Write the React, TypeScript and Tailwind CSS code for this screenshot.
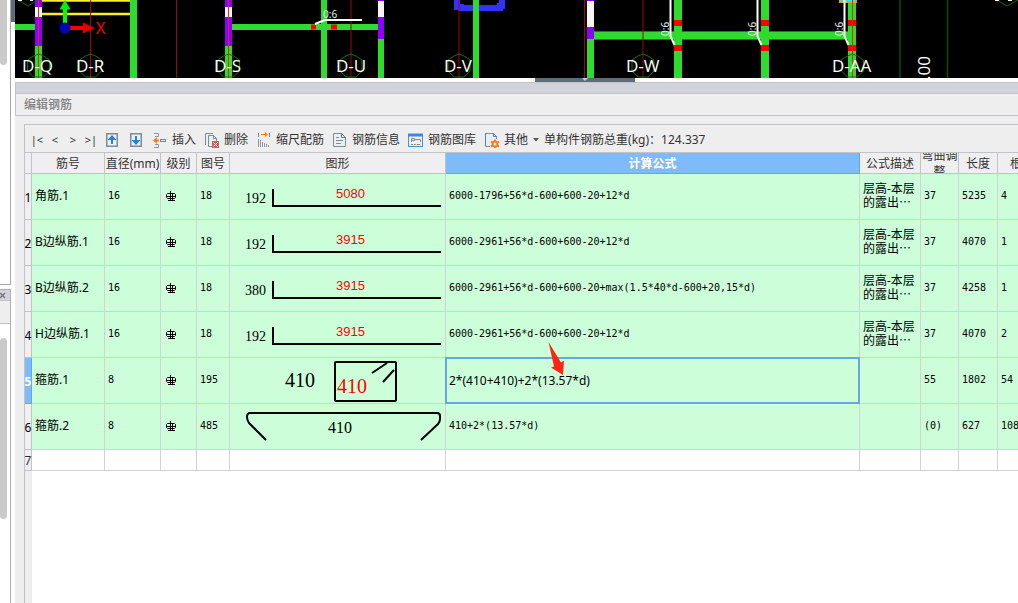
import React from "react";

type Shape =
  | { kind: "hook"; left: string; top: string }
  | { kind: "stirrup"; left: string; inner: string }
  | { kind: "tie"; label: string };

type Row = {
  name: string;
  dia: string;
  no: string;
  shape: Shape;
  formula: string;
  desc: string;
  bend: string;
  len: string;
  count: string;
};

const DESC = "层高-本层的露出⋯";

const ROWS: Row[] = [
  { name: "角筋.1", dia: "16", no: "18", shape: { kind: "hook", left: "192", top: "5080" }, formula: "6000-1796+56*d-600+600-20+12*d", desc: DESC, bend: "37", len: "5235", count: "4" },
  { name: "B边纵筋.1", dia: "16", no: "18", shape: { kind: "hook", left: "192", top: "3915" }, formula: "6000-2961+56*d-600+600-20+12*d", desc: DESC, bend: "37", len: "4070", count: "1" },
  { name: "B边纵筋.2", dia: "16", no: "18", shape: { kind: "hook", left: "380", top: "3915" }, formula: "6000-2961+56*d-600+600-20+max(1.5*40*d-600+20,15*d)", desc: DESC, bend: "37", len: "4258", count: "1" },
  { name: "H边纵筋.1", dia: "16", no: "18", shape: { kind: "hook", left: "192", top: "3915" }, formula: "6000-2961+56*d-600+600-20+12*d", desc: DESC, bend: "37", len: "4070", count: "2" },
  { name: "箍筋.1", dia: "8", no: "195", shape: { kind: "stirrup", left: "410", inner: "410" }, formula: "2*(410+410)+2*(13.57*d)", desc: "", bend: "55", len: "1802", count: "54" },
  { name: "箍筋.2", dia: "8", no: "485", shape: { kind: "tie", label: "410" }, formula: "410+2*(13.57*d)", desc: "", bend: "(0)", len: "627", count: "108" },
];

const SELECTED = 4;

const serif = "font-['Liberation_Serif',serif]";
const mono = "font-['DejaVu_Sans_Mono','Noto_Sans_CJK_SC',monospace] text-[10px]";

function ShapeDrawing({ shape }: { shape: Shape }) {
  return (
    <svg width="215" height="45" className="block" fill="none" stroke="#000" strokeWidth="2">
      {shape.kind === "hook" && (
        <>
          <path d="M43 15V32H211" />
          <text x="15" y="29" className={`${serif} text-[14px]`} fill="#000" stroke="none">{shape.left}</text>
          <text x="106" y="24" className="font-['Liberation_Sans',sans-serif] text-[13px]" fill="#f00" stroke="none">{shape.top}</text>
        </>
      )}
      {shape.kind === "stirrup" && (
        <>
          <rect x="105" y="4" width="61" height="39" rx="1" />
          <path d="M157 5L142 15M164 12L153 24" />
          <text x="55" y="29" className={`${serif} text-[20px]`} fill="#000" stroke="none">{shape.left}</text>
          <text x="107" y="35" className={`${serif} text-[20px]`} fill="#f00" stroke="none">{shape.inner}</text>
        </>
      )}
      {shape.kind === "tie" && (
        <>
          <path d="M36 36L19 19Q17 16 17 13Q17 9 20 9H207Q210 9 210 12V15Q210 18 208 20L191 36" />
          <text x="98" y="29" className={`${serif} text-[16px]`} fill="#000" stroke="none">{shape.label}</text>
        </>
      )}
    </svg>
  );
}

function GradeMark() {
  return (
    <svg width="10" height="11" className="block" fill="none" stroke="#000" aria-label="三级钢">
      <path d="M1.500 2.500H8.500L9.500 3.500V6.500L8.500 7.500H1.500L.5 6.500V3.500ZM4.500 0V10M6.500 2V10M2 9.500H9M1 5.500H9" />
    </svg>
  );
}

function Pillar({ x, w, parts }: { x: number; w: number; parts: [string, number, number][] }) {
  return (
    <>
      {parts.map(([c, y1, y2], i) => (
        <rect key={i} x={x} y={y1} width={w} height={y2 - y1} fill={c} />
      ))}
    </>
  );
}

function Viewport() {
  const G = "#2ddc2d";
  const P = "#8c00ff";
  const W = "#f8f4f8";
  const label = "font-['Open_Sans','Noto_Sans',sans-serif] text-[17px]";
  const axes: [string, number, number][] = [
    ["D-Q", 22, 38.5],
    ["D-R", 76, 90.5],
    ["D-S", 214, 228.5],
    ["D-U", 336, 351],
    ["D-V", 444, 459],
    ["D-W", 626, 643],
    ["D-AA", 832, 852.5],
  ];
  return (
    <svg className="block h-[78px] w-full shrink-0 bg-black">
      <g transform="translate(-15 0)">
        <path d="M15 27H36M228 27H381" stroke={G} strokeWidth="6" />
        <path d="M590 35.500H850" stroke="#178017" strokeWidth="9" />
        <path d="M590 35.500H850" stroke={G} strokeWidth="7" />
        <path d="M42 .5H131M42 14H131" stroke="#f8f02c" strokeWidth="2.500" />
        <Pillar x={35} w={7} parts={[[P, 0, 46], [W, 7, 17], [G, 46, 78]]} />
        <Pillar x={130} w={7} parts={[[G, 0, 78]]} />
        <Pillar x={225} w={7} parts={[[P, 0, 46], [W, 7, 17], [G, 46, 78]]} />
        <Pillar x={321} w={6} parts={[[G, 0, 78]]} />
        <Pillar x={378} w={6} parts={[[P, 0, 39], [W, 1, 17], [G, 39, 78]]} />
        <path d="M457 0V7H461V8H500V6H502V0" fill="none" stroke="#3232ff" strokeWidth="6" />
        <Pillar x={587} w={7} parts={[[P, 0, 39], [W, 1, 27], [G, 39, 78]]} />
        <Pillar x={674} w={8} parts={[[G, 0, 78], ["#f00", 20, 26], ["#f00", 45, 51]]} />
        <Pillar x={761} w={8} parts={[[G, 0, 78], ["#f00", 20, 26], ["#f00", 45, 51]]} />
        <Pillar x={848} w={8} parts={[[G, 0, 78], ["#f00", 20, 26], ["#f00", 45, 51]]} />
        <path d="M311 27H316M331 27H337" stroke="#f00" strokeWidth="5" />
        <path d="M839 1.500H857" stroke="#e8a020" strokeWidth="3" />
        <path d="M841 .5H855" stroke="#20f0f0" strokeWidth="2" />
        <path d="M38.500 0V78M228.500 0V78M852.500 0V78" stroke="#f02020" />
        <path d="M90.500 0V78M176.500 0V78M351 0V78M459 0V78M584.500 0V78M643 0V78" stroke="#9c0808" />
        <Pillar x={473} w={6} parts={[[G, 0, 78]]} />
        <path d="M900 0V78M947.500 0V78" stroke="#064f06" strokeWidth="1.500" />
        <path d="M315 24L325 20H362" fill="none" stroke="#fff" strokeWidth="2" />
        {[670.5, 757.5, 844.5].map((x) => (
          <g key={x}>
            <path d={`M${x} 0V36L${x + 4} 45`} fill="none" stroke="#fff" strokeWidth="2" />
            <text transform={`translate(${x - 2} 36) rotate(-90)`} className="font-['Noto_Sans',sans-serif] text-[10px]" fill="#eee">0:6</text>
          </g>
        ))}
        <text x="323" y="18" className="font-['Noto_Sans',sans-serif] text-[10px]" fill="#eee">0:6</text>
        {axes.map(([t, x, c]) => (
          <g key={t}>
            <path d={`M${c - 5} 56L${c} 54L${c + 5} 56L${c + 11} 60V71L${c + 5} 77H${c - 5}L${c - 11} 71V60Z`} fill="none" stroke="#0b7b0b" />
            <text x={x} y="72" className={label} fill="#fff">{t}</text>
          </g>
        ))}
        <path d="M18 0L28 6L38 0M997 0L1007 6L1018 0" fill="none" stroke="#0b6b0b" />
        <path d="M18 .5H22M30 .5H33M995 .5H999M1008 .5H1012" stroke="#fff" />
        <path d="M65 26V8" stroke="#0f0" strokeWidth="4" />
        <path d="M59.500 9.500L65 0L70.500 9.500Z" fill="#00f010" />
        <path d="M68 28H84" stroke="#f00" strokeWidth="4" />
        <path d="M83 22.500V33.500L95 28Z" fill="#e00000" />
        <circle cx="65" cy="28" r="5.500" fill="#0505b8" />
        <text x="96" y="34" className="font-['Noto_Sans',sans-serif] text-[16px]" fill="#f00">X</text>
        <text transform="translate(930 80) rotate(-90)" className={label} fill="#fff">.00</text>
      </g>
    </svg>
  );
}

function LeftStrip() {
  return (
    <aside className="flex w-[15px] shrink-0 flex-col bg-white">
      <div className="flex h-[285px] shrink-0">
        <div className="w-[11px] border-r border-b border-[#a8a8a8]">
          <div className="h-[65px] w-[7px] rounded-b bg-[#cacaca]" />
        </div>
        <div className="h-[22px] w-1 bg-[#5f6c78]" />
      </div>
      <div className="mt-1 flex w-[11px] grow flex-col border-t border-r border-[#b0b0b4]">
        <button aria-label="关闭" className="flex h-[11px] shrink-0 items-center border-b border-[#c0c0c6] bg-[#d2d3da]">
          <svg width="6" height="7" stroke="#777" strokeWidth="1.500"><path d="M0 1L5 6M5 1L0 6" /></svg>
        </button>
        <div className="h-[23px] shrink-0 border-b border-[#c0c0c6] bg-[#eee]" />
        <div className="mt-[14px] h-[181px] w-[7px] rounded bg-[#cacaca]" />
      </div>
    </aside>
  );
}

function Arrow({ down }: { down?: boolean }) {
  return (
    <svg width="12" height="14" fill="none">
      <rect x=".75" y=".75" width="10.500" height="12.500" stroke="#7d8c99" strokeWidth="1.500" />
      {down ? (
        <path d="M5 3H7V7H10.500L6 12L1.500 7H5Z" fill="#2f7fd0" />
      ) : (
        <path d="M5 11H7V7H10.500L6 2L1.500 7H5Z" fill="#2f7fd0" />
      )}
    </svg>
  );
}

const ICONS: Record<string, React.ReactNode> = {
  插入: (
    <>
      <path d="M2 1.500H6.500V4.500H3M3 12.500H6.500V15.500H2" stroke="#8b98a3" />
      <path d="M7 8.500H4" stroke="#f08020" strokeWidth="2" />
      <path d="M5 5V12L1 8.500Z" fill="#f08020" />
      <rect x="8.500" y="7.500" width="5" height="2" stroke="#4a90d9" />
    </>
  ),
  删除: (
    <>
      <path d="M1.500 13V1.500H9M8 14.500H4.500V3.500H9.500L12.500 6.500V9M9.500 3.500V6.500H12.500" stroke="#7d8c99" />
      <rect x="8" y="9" width="7" height="7" fill="#d85a5a" />
      <path d="M9.500 10.500L13.500 14.500M13.500 10.500L9.500 14.500" stroke="#fff" />
    </>
  ),
  缩尺配筋: (
    <>
      <path d="M2.500 1V5M13.500 1V5" stroke="#4a90d9" />
      <path d="M5 2.500H10" stroke="#f08020" />
      <path d="M9 0L12 2.500L9 5Z" fill="#f08020" />
      <path d="M2.500 7V15M4.500 8V15M6.500 10V15M8.500 11V15M10.500 12V15M12.500 13V15" stroke="#8b98a3" />
    </>
  ),
  钢筋信息: (
    <>
      <path d="M9.500 1.500H1.500V14.500H13.500V5.500" stroke="#7d8c99" />
      <path d="M9.500 1V5.500H14M9.500 1.500L13.500 5.500" stroke="#3f86d4" />
      <path d="M4 5.500H7M4 8.500H11M4 11.500H9" stroke="#7d8c99" />
    </>
  ),
  钢筋图库: (
    <>
      <rect x=".5" y="2.500" width="14" height="12" stroke="#4a90d9" />
      <path d="M0 3H15" stroke="#3f86d4" strokeWidth="3" />
      <path d="M3.500 10V6.500H6.500V8.500H3.500M6 7.500H12.500V10" stroke="#7d8c99" />
      <path d="M3 12.500H5" stroke="#58b858" />
      <path d="M6 12.500H8" stroke="#f08020" />
      <path d="M9 12.500H12" stroke="#d85a5a" />
    </>
  ),
  其他: (
    <>
      <path d="M6 14.500H1.500V1.500H9.500L12.500 4.500V7" stroke="#7d8c99" />
      <path d="M9.500 1V4.500H13M1.500 1V14" stroke="#3f86d4" />
      <circle cx="11" cy="12" r="2.500" stroke="#f08020" strokeWidth="2" />
      <path d="M11 7.500V9M11 15V16M7 9.500L8.500 10.500M15 9.500L13.500 10.500M7 14.500L8.500 13.500M15 14.500L13.500 13.500" stroke="#f08020" strokeWidth="2" />
    </>
  ),
};

function Toolbar() {
  return (
    <div className="flex h-[28px] items-center border-b border-[#c2c3c8] pt-[3px] pl-[3px] whitespace-nowrap">
      {["|<", "<", ">", ">|"].map((t) => (
        <button key={t} className="w-[18px] text-center text-[11px]">{t}</button>
      ))}
      <button aria-label="上移" className="flex w-6 justify-center"><Arrow /></button>
      <button aria-label="下移" className="flex w-6 justify-center"><Arrow down /></button>
      <div className="ml-1 flex gap-2">
        {Object.keys(ICONS).map((t) => (
          <button key={t} className="flex items-center gap-1">
            <svg width="16" height="16" fill="none">{ICONS[t]}</svg>
            <span>{t}</span>
            {t === "其他" && (
              <svg width="8" height="4"><path d="M1 0H7L4 3.500Z" fill="#555" /></svg>
            )}
          </button>
        ))}
        <span className="-ml-1">单构件钢筋总重(kg)：124.337</span>
      </div>
    </div>
  );
}

const HEADERS = ["筋号", "直径(mm)", "级别", "图号", "图形", "计算公式", "公式描述", "弯曲调整", "长度", "根数"];

const cell = "border-r border-b border-[#d2d2d4] p-0 align-middle";
const pad = "pb-px pl-[3px]";

function RowHead({ n, active }: { n: number; active?: boolean }) {
  return (
    <th
      scope="row"
      className={
        active
          ? "border-r border-b border-[#6aa5e3] bg-[#80bbf9] p-0 font-bold text-white"
          : "border-r border-b border-[#c2c3c8] bg-[#efefef] p-0 font-normal"
      }
    >
      <div className="flex justify-center pt-[2px]">{n}</div>
    </th>
  );
}

function RebarTable() {
  return (
    <table className="w-[1033px] table-fixed border-separate border-spacing-0">
      <colgroup>
        <col className="w-[7px]" />
        <col className="w-[73px]" />
        <col className="w-[56px]" />
        <col className="w-[36px]" />
        <col className="w-[33px]" />
        <col className="w-[216px]" />
        <col className="w-[414px]" />
        <col className="w-[61px]" />
        <col className="w-[38px]" />
        <col className="w-[39px]" />
        <col className="w-[60px]" />
      </colgroup>
      <thead>
        <tr className="h-[21px]">
          <th className="border-r border-b border-[#c2c3c8] bg-[#efefef] p-0" />
          {HEADERS.map((h) => (
            <th
              key={h}
              scope="col"
              className={
                h === "计算公式"
                  ? "border-r border-b border-[#6aa5e3] bg-[#80bbf9] p-0 font-bold text-white"
                  : "border-r border-b border-[#c2c3c8] bg-[#efefef] p-0 font-normal"
              }
            >
              {h === "根数" ? (
                <div className="flex h-5 items-center pt-[2px] pl-3">{h}</div>
              ) : (
                <div className="flex h-5 items-center justify-center overflow-hidden pt-[2px] leading-4">
                  <span className={h === "弯曲调整" ? "" : "whitespace-nowrap"}>{h}</span>
                </div>
              )}
            </th>
          ))}
        </tr>
      </thead>
      <tbody>
        {ROWS.map((r, i) => (
          <tr key={r.name} className="h-[46px] bg-[#ccffd9] text-black">
            <RowHead n={i + 1} active={i === SELECTED} />
            <td className={`${cell} ${pad} whitespace-nowrap`}>{r.name}</td>
            <td className={`${cell} ${pad} ${mono}`}>{r.dia}</td>
            <td className={`${cell} pl-[5px]`}><GradeMark /></td>
            <td className={`${cell} ${pad} ${mono}`}>{r.no}</td>
            <td className={cell}><ShapeDrawing shape={r.shape} /></td>
            {i === SELECTED ? (
              <td className={`${cell} relative`}>
                <input
                  aria-label="计算公式"
                  defaultValue={r.formula}
                  className="relative z-10 block h-[45px] w-full bg-[#ccffd9] pl-[3px] outline-2 outline-offset-[-1px] outline-[#6aa5e3]"
                />
                <svg width="24" height="36" className="pointer-events-none absolute -top-4 left-[102px] z-20">
                  <path d="M.5 0L13 20.500L16 18.500L15 33L3 25.500L6 24.500Z" fill="#ff2416" />
                </svg>
              </td>
            ) : (
              <td className={`${cell} ${pad} ${mono} whitespace-nowrap`}>{r.formula}</td>
            )}
            <td className={`${cell} ${pad} leading-[14px]`}>{r.desc}</td>
            <td className={`${cell} ${pad} ${mono}`}>{r.bend}</td>
            <td className={`${cell} ${pad} ${mono}`}>{r.len}</td>
            <td className={`${cell} ${pad} ${mono}`}>{r.count}</td>
          </tr>
        ))}
        <tr className="h-[21px]">
          <RowHead n={ROWS.length + 1} />
          {HEADERS.map((h) => (
            <td key={h} className={cell} />
          ))}
        </tr>
      </tbody>
    </table>
  );
}

export default function App() {
  return (
    <div className="flex h-screen overflow-hidden bg-white font-['Noto_Sans','Noto_Sans_CJK_SC',sans-serif] text-xs text-[#333]">
      <LeftStrip />
      <main className="flex min-w-0 grow flex-col">
        <Viewport />
        <div className="flex h-1 shrink-0 justify-center pl-[137px]">
          <div className="flex w-[100px] justify-center bg-[#5f6c78]">
            <svg width="6" height="3"><path d="M0 0H6L3 3Z" fill="#ccc" /></svg>
          </div>
        </div>
        <div className="h-[12px] shrink-0 border-y border-l border-[#c2c3c8] bg-[#d2d3da]" />
        <h2 className="flex h-[22px] shrink-0 items-center border-b border-l border-[#c2c3c8] bg-[#eee] pt-px pl-2 font-medium text-[#808080]">编辑钢筋</h2>
        <section className="flex min-h-0 grow flex-col bg-[#eee] pt-2 pl-[9px]">
          <div className="flex min-h-0 grow flex-col overflow-hidden border-t border-l border-[#c2c3c8]">
            <Toolbar />
            <div className="flex min-h-0 grow flex-col overflow-hidden bg-white">
              <RebarTable />
              <div className="w-[7px] grow bg-[#eee]" />
            </div>
          </div>
        </section>
      </main>
    </div>
  );
}
